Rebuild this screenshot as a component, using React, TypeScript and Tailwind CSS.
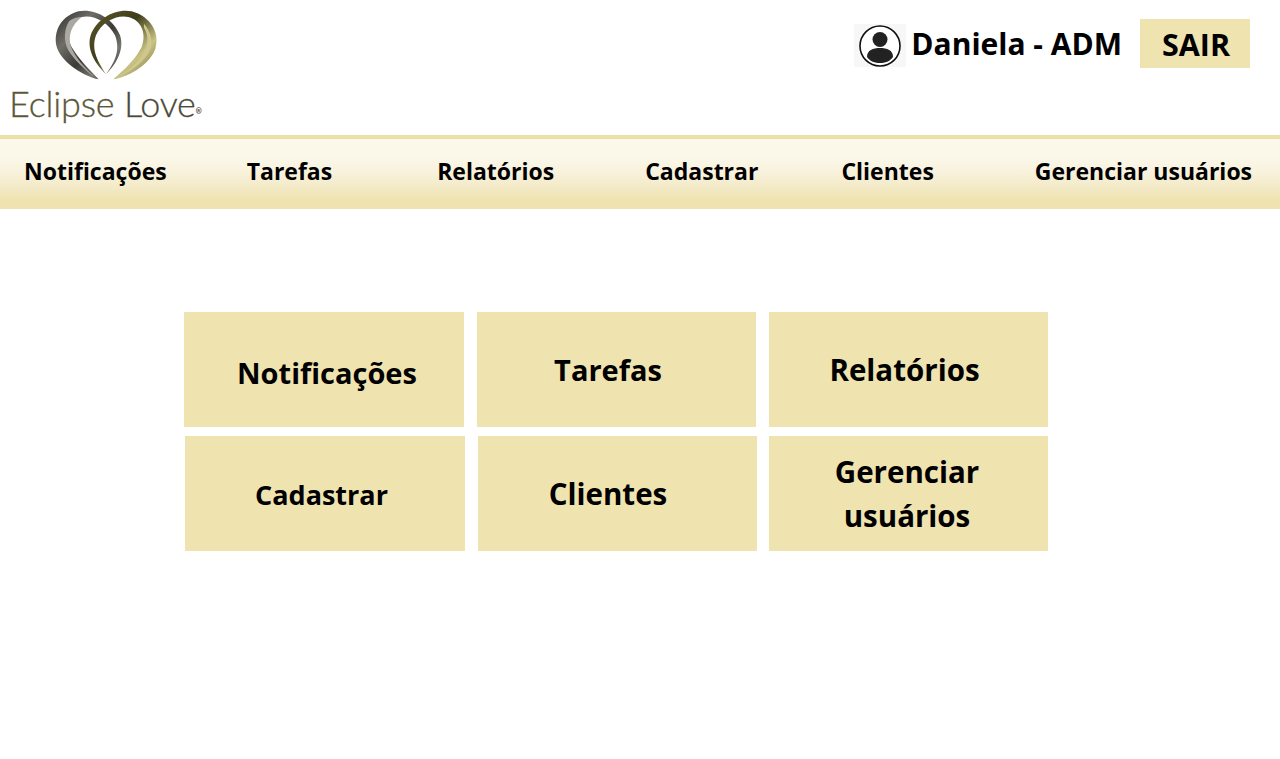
import React from "react";

const font = { fontFamily: '"Open Sans", sans-serif' };

function Rings() {
  return (
    <svg width="110" height="74" viewBox="150 24 330 220" className="block">
      <defs>
        <linearGradient id="silver" x1="0" y1="0" x2="1" y2="1">
          <stop offset="0" stopColor="#2f2d2a" />
          <stop offset="0.3" stopColor="#6f6d68" />
          <stop offset="0.55" stopColor="#3c3a36" />
          <stop offset="0.75" stopColor="#77756f" />
          <stop offset="1" stopColor="#24221f" />
        </linearGradient>
        <linearGradient id="gold" x1="0" y1="0" x2="1" y2="1">
          <stop offset="0" stopColor="#5d5a2c" />
          <stop offset="0.4" stopColor="#3f3c1b" />
          <stop offset="0.7" stopColor="#c9c284" />
          <stop offset="1" stopColor="#6a6635" />
        </linearGradient>
      </defs>
      <path
        d="M296 237 C250 226 190 190 172 145 C158 105 175 50 235 33 C285 24 340 55 360 105 C375 150 345 195 318 222 C345 185 362 150 345 105 C325 65 280 42 245 50 C205 60 195 100 215 140 C235 175 270 210 296 237 Z"
        fill="url(#silver)"
      />
      <path
        d="M208 62 C192 85 190 122 204 148 C222 178 255 208 285 232 C252 200 224 170 212 137 C204 105 214 75 245 50 C232 50 218 54 208 62 Z"
        fill="#a9a8a2"
      />
      <path
        d="M340 237 C395 226 450 190 466 145 C480 100 455 50 395 33 C345 24 290 55 272 105 C258 150 290 195 318 222 C295 185 272 150 288 105 C305 65 350 42 385 50 C425 60 440 100 425 140 C405 180 370 210 340 237 Z"
        fill="url(#gold)"
      />
      <path
        d="M432 82 C446 104 446 130 432 155 C415 185 385 212 352 232 C395 212 438 180 452 145 C460 118 450 92 432 70 Z"
        fill="#cfc88c"
      />
    </svg>
  );
}

function UserIcon() {
  return (
    <svg width="44" height="44" viewBox="0 0 44 44" className="block">
      <circle cx="22" cy="22" r="20" fill="#fff" stroke="#111" strokeWidth="1.6" />
      <circle cx="22" cy="15.5" r="7.5" fill="#222" />
      <path d="M9 33 C9 26 15 24 22 24 C29 24 35 26 35 33 C32 37.5 27 39 22 39 C17 39 12 37.5 9 33 Z" fill="#222" />
    </svg>
  );
}

function NavItem({ label, className }: { label: string; className: string }) {
  return <span className={`text-[23px] font-bold text-black whitespace-nowrap ${className}`}>{label}</span>;
}

function Card({ children, className }: { children: React.ReactNode; className: string }) {
  return (
    <div className={`h-[115px] bg-[#efe3b0] flex items-center justify-center text-center font-bold text-black leading-[44px] ${className}`}>
      {children}
    </div>
  );
}

export default function App() {
  return (
    <div className="min-h-[759px] bg-white" style={font}>
      <header className="h-[135px] flex justify-between">
        <div className="pl-[9px] pt-[8px]">
          <div className="pl-[41px]">
            <Rings />
          </div>
          <div className="mt-[1px] text-[36px] leading-[40px] whitespace-nowrap text-[#5b5738] tracking-[-0.2px]" style={{ fontFamily: 'Lato, sans-serif', fontWeight: 300, WebkitTextStroke: '0.3px #5b5738' }}>
            Eclipse <span className="text-[#45453e]">Love</span>
            <sup className="text-[7px] text-[#555]">®</sup>
          </div>
        </div>
        <div className="flex items-start pr-[30px] pt-[19px]">
          <div className="mt-[5px] w-[52px] h-[43px] bg-[#f7f7f7] flex items-center justify-center">
            <UserIcon />
          </div>
          <span className="ml-[5px] text-[30px] leading-[50px] font-bold text-black whitespace-nowrap">Daniela - ADM</span>
          <div className="ml-[18px] w-[110px] h-[49px] pt-[3px] pl-[2px] bg-[#efe3b0] flex items-center justify-center text-[30.5px] font-bold text-black">SAIR</div>
        </div>
      </header>

      <nav className="h-[74px] border-t-[4px] border-[#ecdfaa] bg-[linear-gradient(to_bottom,#fcf9ec_0%,#fbf7e8_28%,#f8f2dc_48%,#f3eac8_68%,#efe3b0_88%)] flex items-center pl-[24px] pb-[6px]">
        <NavItem label="Notificações" className="" />
        <NavItem label="Tarefas" className="ml-[80px]" />
        <NavItem label="Relatórios" className="ml-[105px]" />
        <NavItem label="Cadastrar" className="ml-[91px]" />
        <NavItem label="Clientes" className="ml-[83px]" />
        <NavItem label="Gerenciar usuários" className="ml-[101px]" />
      </nav>

      <main className="pt-[103px] pl-[184px]">
        <div className="flex gap-[13px]">
          <Card className="w-[280px] pl-[6px] pt-[7px] text-[29px]">Notificações</Card>
          <Card className="w-[279px] pr-[17px] text-[29px]">Tarefas</Card>
          <Card className="w-[279px] pr-[8px] text-[29.5px]">Relatórios</Card>
        </div>
        <div className="flex gap-[13px] mt-[9px] pl-[1px]">
          <Card className="w-[280px] pr-[7px] pt-[3px] text-[27px]">Cadastrar</Card>
          <Card className="w-[279px] pr-[19px] text-[29.5px]">Clientes</Card>
          <Card className="w-[279px] -ml-[1px] pr-[3px] text-[29.5px]">
            <span>Gerenciar<br />usuários</span>
          </Card>
        </div>
      </main>
    </div>
  );
}
